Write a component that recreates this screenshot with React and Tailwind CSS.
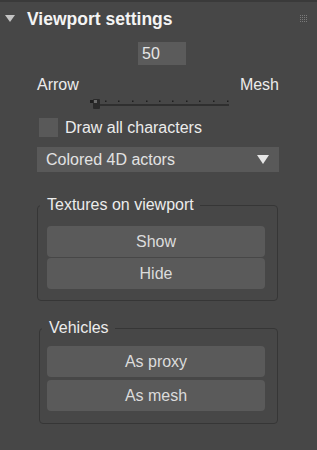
import React from 'react';

const font = { fontFamily: '"Liberation Sans", Arial, sans-serif' };

// little 4x4 grip in the header's right corner
const Grip = () => (
  <svg width="8" height="8" viewBox="0 0 8 8" className="block">
    {[0, 2, 4, 6].map((y) =>
      [0, 2, 4, 6].map((x) => <rect key={`${x}-${y}`} x={x} y={y} width="1" height="1" fill="#7a7a7a" />)
    )}
  </svg>
);

const Slider = () => {
  const dots = [15, 28, 42, 56, 69, 82, 96, 109, 123, 137];
  return (
    <svg width="140" height="14" viewBox="0 0 140 14" className="block">
      <rect x="8" y="7" width="131" height="2" fill="#2f2f2f" />
      {dots.map((x) => (
        <rect key={x} x={x} y="3.5" width="1.5" height="1.5" fill="#1e1e1e" />
      ))}
      <rect x="0" y="3" width="3" height="3" fill="#1e1e1e" />
      <rect x="3" y="2" width="7" height="10" rx="1" fill="#2a2a2a" />
      <rect x="4" y="3" width="3" height="3" fill="#6b6b6b" />
    </svg>
  );
};

const GroupBox = ({ title, className, legendTop, children }) => (
  <fieldset className={`border border-[#363636] rounded-[4px] ${className}`}>
    <legend className="ml-[2px] pl-[7px] pr-[6px] text-[16px] leading-[18px] text-[#ececec]">{title}</legend>
    <div className={`flex flex-col ${legendTop}`}>{children}</div>
  </fieldset>
);

const Btn = ({ children }) => (
  <button className="ml-[9px] w-[218px] h-[31px] rounded-[4px] bg-[#5a5a5a] text-[16px] text-[#dcdcdc]">
    {children}
  </button>
);

export default function App() {
  return (
    <div style={font} className="w-[317px] h-[450px] bg-[#474747] border-t-2 border-[#3a3a3a] overflow-hidden">
      {/* header */}
      <div className="flex items-center h-[32px] pl-[5px] pr-[9px] pt-[1px]">
        <svg width="10" height="7" viewBox="0 0 10 7" className="block">
          <path d="M0 0 H10 L5 7 Z" fill="#c4c4c4" />
        </svg>
        <span className="ml-[12px] text-[17.5px] leading-[20px] font-bold text-[#f4f4f4]">Viewport settings</span>
        <div className="ml-auto">
          <Grip />
        </div>
      </div>

      {/* value */}
      <div className="mt-[8px] ml-[138px] w-[48px] h-[23px] bg-[#5b5b5b] pl-[4px] text-[16px] leading-[23px] text-[#e6e6e6]">
        50
      </div>

      <div className="mt-[11px] ml-[37px] w-[242px] flex justify-between text-[16px] leading-[18px] text-[#ececec]">
        <span>Arrow</span>
        <span>Mesh</span>
      </div>

      <div className="mt-[3px] ml-[90px]">
        <Slider />
      </div>

      {/* checkbox */}
      <div className="mt-[7px] ml-[39px] flex items-center gap-[7px]">
        <div className="w-[19px] h-[19px] bg-[#595959]" />
        <span className="text-[16px] leading-[18px] text-[#ececec]">Draw all characters</span>
      </div>

      {/* dropdown */}
      <div className="mt-[10px] ml-[37px] w-[242px] h-[25px] bg-[#595959] flex items-center pl-[9px] pr-[10px] text-[16px] text-[#e2e2e2]">
        <span>Colored 4D actors</span>
        <svg width="12" height="9" viewBox="0 0 12 9" className="ml-auto block">
          <path d="M0 0 H12 L6 9 Z" fill="#e6e6e6" />
        </svg>
      </div>

      <GroupBox title="Textures on viewport" className="mt-[24px] ml-[37px] w-[241px] pb-[11px]" legendTop="mt-[12px] gap-[1px]">
        <Btn>Show</Btn>
        <Btn>Hide</Btn>
      </GroupBox>

      <GroupBox title="Vehicles" className="mt-[18px] ml-[39px] w-[239px] pb-[12px]" legendTop="mt-[9px] gap-[3px]">
        <div className="-ml-[2px] flex flex-col gap-[3px]">
          <Btn>As proxy</Btn>
          <Btn>As mesh</Btn>
        </div>
      </GroupBox>
    </div>
  );
}
